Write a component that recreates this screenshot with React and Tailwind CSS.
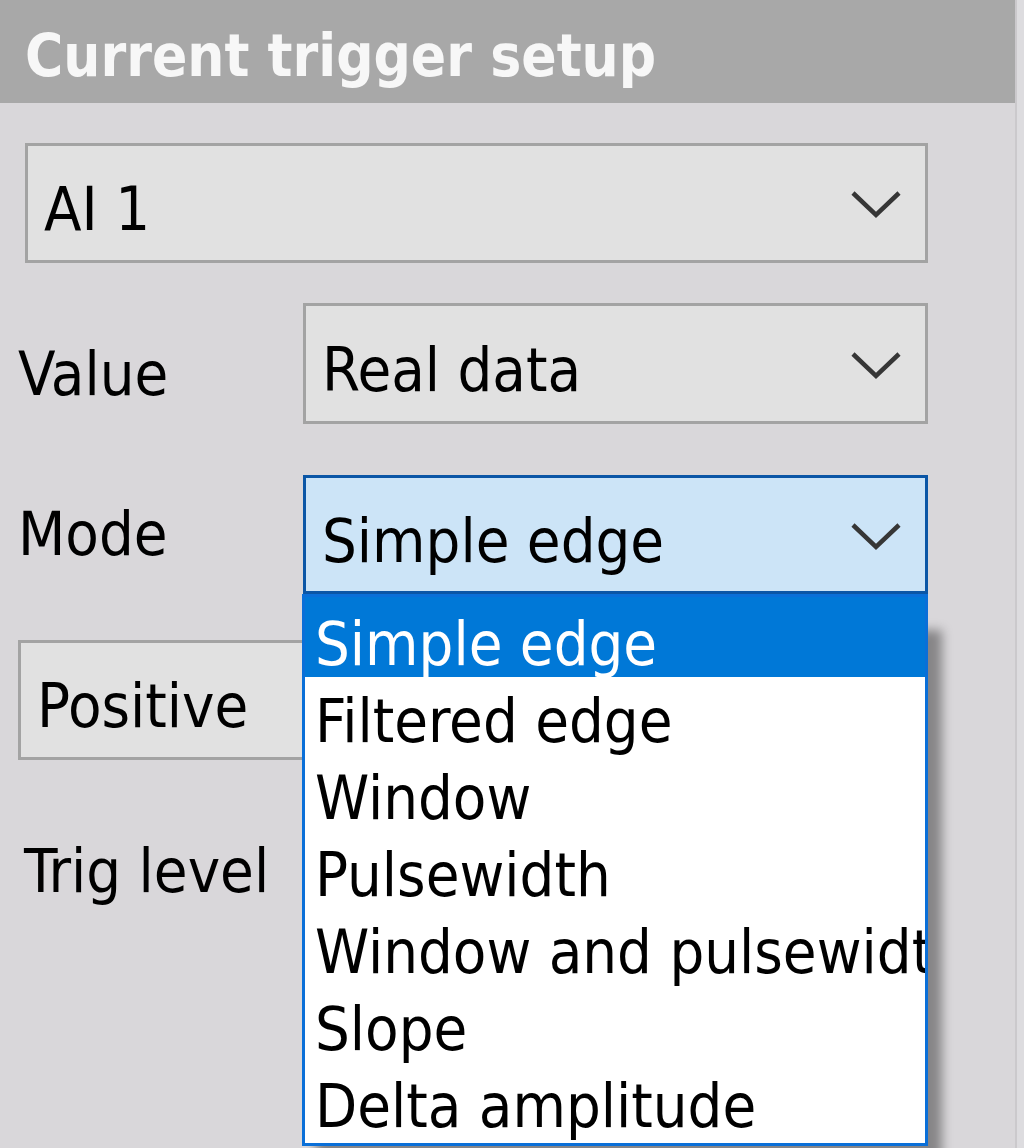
import React from "react";

function Chevron() {
  return (
    <svg width="52" height="30" viewBox="0 0 52 30" className="-mt-[9px] shrink-0">
      <polyline points="3,4 26,26 49,4" fill="none" stroke="#363636" strokeWidth="4.5" strokeLinejoin="miter" />
    </svg>
  );
}

function Combo({ text, className, focused }) {
  const base = focused
    ? "border-[#0b56a6] bg-[#cce4f7]"
    : "border-[#a3a3a3] bg-[#e1e1e1]";
  return (
    <div className={`flex items-center justify-between border-[3px] pt-[11px] pl-[16px] pr-[23px] ${base} ${className}`}>
      <span className="whitespace-nowrap leading-[77px]">{text}</span>
      <Chevron />
    </div>
  );
}

const items = [
  "Filtered edge",
  "Window",
  "Pulsewidth",
  "Window and pulsewidth",
  "Slope",
  "Delta amplitude",
];

function DropList() {
  return (
    <div className="absolute left-[-1px] top-full z-10 w-[626px] overflow-hidden border-[3px] border-[#0a6fd8] bg-white shadow-[14px_36px_10px_rgba(0,0,0,0.38)]">
      <div className="h-[80px] whitespace-nowrap bg-[#0078d7] pl-[10px] pt-[14px] leading-[66px] text-white">
        Simple edge
      </div>
      {items.map((t, i) => (
        <div
          key={t}
          className={`whitespace-nowrap pl-[10px] pt-[11px] leading-[66px] text-black ${i === items.length - 1 ? "h-[81px]" : "h-[77px]"}`}
        >
          {t}
        </div>
      ))}
    </div>
  );
}

export default function App() {
  return (
    <div className="flex h-[1148px] w-[1024px] overflow-hidden bg-[#dddcdf] font-['DejaVu_Sans_Condensed','Liberation_Sans',sans-serif] text-[61px] text-black">
      <div className="flex w-[1017px] shrink-0 flex-col border-r-2 border-[#cbc9cc] bg-[#d9d7da]">
        <div className="h-[103px] shrink-0 whitespace-nowrap bg-[#a8a8a8] pl-[25px] pt-[10px] text-[58px] font-bold leading-[93px] text-[#f7f7f7]">
          Current trigger setup
        </div>

        <Combo text="AI 1" className="ml-[25px] mt-[40px] h-[120px] w-[903px]" />

        <div className="mt-[40px] flex">
          <div className="w-[303px] shrink-0 pl-[18px] pt-[32px] leading-[77px]">Value</div>
          <Combo text="Real data" className="h-[121px] w-[625px]" />
        </div>

        <div className="mt-[51px] flex">
          <div className="w-[303px] shrink-0 pl-[18px] pt-[20px] leading-[77px]">Mode</div>
          <div className="relative">
            <Combo text="Simple edge" focused className="h-[119px] w-[625px]" />
            <DropList />
          </div>
        </div>

        <Combo text="Positive" className="ml-[18px] mt-[46px] h-[120px] w-[910px]" />

        <div className="mt-[20px] flex">
          <div className="w-[303px] shrink-0 whitespace-nowrap pl-[24px] pt-[52px] leading-[77px]">Trig level</div>
          <div className="mt-[40px] h-[120px] w-[625px] border-[3px] border-[#a3a3a3] bg-white" />
        </div>
      </div>
      <div className="flex-1" />
    </div>
  );
}
